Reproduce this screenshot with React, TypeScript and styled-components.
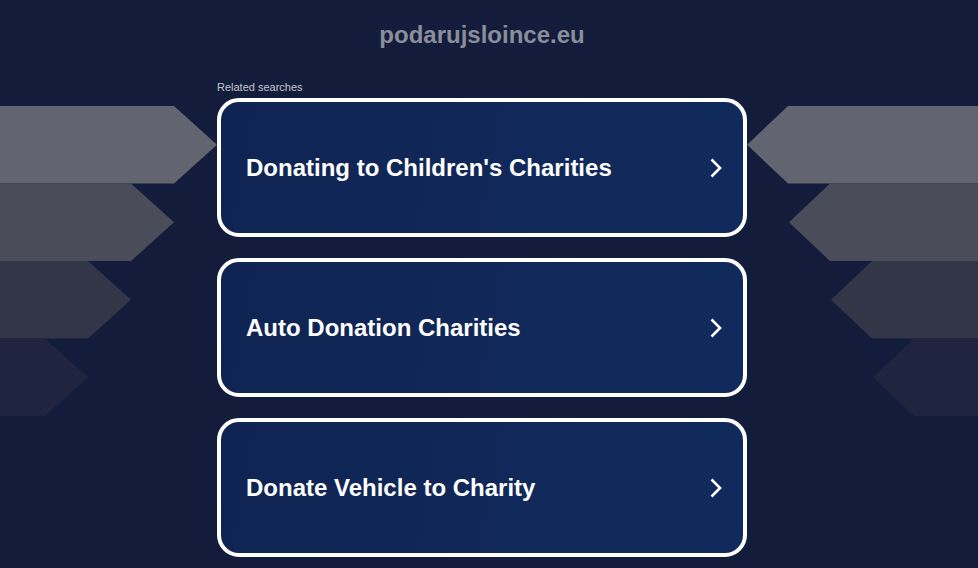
import styled, { createGlobalStyle } from "styled-components";

const GlobalStyle = createGlobalStyle`
  html, body {
    margin: 0;
    padding: 0;
    background: #131c3a;
    font-family: "Liberation Sans", Arial, sans-serif;
  }
`;

const Page = styled.div`
  position: relative;
  width: 100%;
  min-height: 568px;
  overflow: hidden;
  background: #131c3a;
`;

const Decor = styled.svg<{ $side: "left" | "right" }>`
  position: absolute;
  top: 0;
  ${(p) => (p.$side === "left" ? "left: 0;" : "right: 0;")}
  width: 240px;
  height: 568px;
  pointer-events: none;
`;

const Column = styled.div`
  position: relative;
  display: flex;
  flex-direction: column;
  width: 530px;
  margin: 0 auto;
  padding-right: 14px;
`;

const Domain = styled.h1`
  margin: 0;
  box-sizing: border-box;
  padding-top: 22px;
  height: 80px;
  text-align: center;
  font-size: 24px;
  line-height: 26px;
  font-weight: bold;
  color: #8a8e9b;
`;

const Related = styled.div`
  font-size: 11px;
  line-height: 14px;
  color: #c2c6cf;
  height: 18px;
`;

const List = styled.div`
  display: flex;
  flex-direction: column;
  gap: 21px;
`;

const Card = styled.a`
  display: flex;
  align-items: center;
  justify-content: space-between;
  box-sizing: border-box;
  height: 139px;
  padding: 0 20px 0 25px;
  border: 4px solid #ffffff;
  border-radius: 22px;
  background: linear-gradient(100deg, #0f2452 0%, #11285a 60%, #112a5c 100%);
  text-decoration: none;
  cursor: pointer;
`;

const CardTitle = styled.span`
  font-size: 24px;
  font-weight: bold;
  color: #ffffff;
`;

const Chevron = styled.svg`
  width: 14px;
  height: 22px;
  flex-shrink: 0;
`;

const bands = ["#62646f", "#4a4c5a", "#333646", "#1f2540"];

const searches = [
  "Donating to Children's Charities",
  "Auto Donation Charities",
  "Donate Vehicle to Charity",
];

export default function App() {
  const bandH = 77.5;
  const top0 = 106;

  return (
    <Page>
      <GlobalStyle />
      <Decor $side="left" viewBox="0 0 240 568">
        {bands.map((c, i) => {
          const t = top0 + bandH * i;
          const b = t + bandH;
          const m = (t + b) / 2;
          const tip = 217 - 43 * i;
          const s = tip - 43;
          return <polygon key={i} fill={c} points={`0,${t} ${s},${t} ${tip},${m} ${s},${b} 0,${b}`} />;
        })}
      </Decor>
      <Decor $side="right" viewBox="738 0 240 568">
        {bands.map((c, i) => {
          const t = top0 + bandH * i;
          const b = t + bandH;
          const m = (t + b) / 2;
          const tip = 747 + 42 * i;
          const s = tip + 41;
          return <polygon key={i} fill={c} points={`978,${t} ${s},${t} ${tip},${m} ${s},${b} 978,${b}`} />;
        })}
      </Decor>
      <Column>
        <Domain>podarujsloince.eu</Domain>
        <Related>Related searches</Related>
        <List>
          {searches.map((s) => (
            <Card key={s}>
              <CardTitle>{s}</CardTitle>
              <Chevron viewBox="0 0 14 22">
                <polyline points="2.5,2.5 11,11 2.5,19.5" fill="none" stroke="#ffffff" strokeWidth="2.6" />
              </Chevron>
            </Card>
          ))}
        </List>
      </Column>
    </Page>
  );
}
